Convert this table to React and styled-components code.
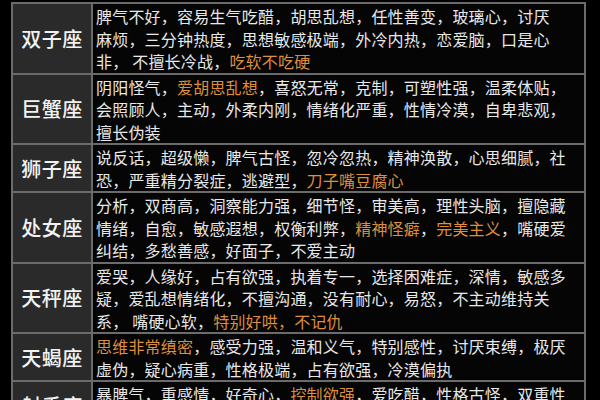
import styled, { createGlobalStyle } from "styled-components";

const GlobalStyle = createGlobalStyle`
  html, body {
    margin: 0;
    padding: 0;
    background: #000;
    width: 600px;
    height: 400px;
    overflow: hidden;
  }
  body {
    font-family: "Noto Sans CJK SC", "Noto Sans", sans-serif;
  }
`;

const Table = styled.div`
  margin: 2px 0 0 11px;
  width: 571px;
  border: 2px solid #6b6b6b;
  border-bottom: none;
  background: #050505;
`;

const Row = styled.div`
  display: grid;
  grid-template-columns: 80px 1fr;
  border-bottom: 2px solid #6b6b6b;
`;

const Sign = styled.div`
  display: flex;
  align-items: center;
  justify-content: center;
  background: #2a2a2a;
  border-right: 2px solid #6b6b6b;
  color: #f2f2f2;
  font-size: 20px;
  font-weight: 500;
  letter-spacing: 0.5px;
`;

const Traits = styled.div`
  padding: 1px 0 0 3px;
  color: #e8e8e8;
  font-size: 16px;
  line-height: 22.5px;
  letter-spacing: 0.2px;
  white-space: nowrap;
`;

const Line = styled.div``;

const Hl = styled.span`
  color: #de8e3c;
`;

const rows = [
  {
    sign: "双子座",
    lines: [
      ["脾气不好，容易生气吃醋，胡思乱想，任性善变，玻璃心，讨厌"],
      ["麻烦，三分钟热度，思想敏感极端，外冷内热，恋爱脑，口是心"],
      ["非， 不擅长冷战，", { hl: "吃软不吃硬" }],
    ],
  },
  {
    sign: "巨蟹座",
    lines: [
      ["阴阳怪气，", { hl: "爱胡思乱想" }, "，喜怒无常，克制，可塑性强，温柔体贴，"],
      ["会照顾人，主动，外柔内刚，情绪化严重，性情冷漠，自卑悲观，"],
      ["擅长伪装"],
    ],
  },
  {
    sign: "狮子座",
    lines: [
      ["说反话，超级懒，脾气古怪，忽冷忽热，精神涣散，心思细腻，社"],
      ["恐，严重精分裂症，逃避型，", { hl: "刀子嘴豆腐心" }],
    ],
  },
  {
    sign: "处女座",
    lines: [
      ["分析，双商高，洞察能力强，细节怪，审美高，理性头脑，擅隐藏"],
      [
        "情绪，自愈，敏感遐想，权衡利弊，",
        { hl: "精神怪癖" },
        "，",
        { hl: "完美主义" },
        "，嘴硬爱",
      ],
      ["纠结，多愁善感，好面子，不爱主动"],
    ],
  },
  {
    sign: "天秤座",
    lines: [
      ["爱哭，人缘好，占有欲强，执着专一，选择困难症，深情，敏感多"],
      ["疑，爱乱想情绪化，不擅沟通，没有耐心，易怒，不主动维持关"],
      ["系， 嘴硬心软，", { hl: "特别好哄，不记仇" }],
    ],
  },
  {
    sign: "天蝎座",
    lines: [
      [{ hl: "思维非常缜密" }, "，感受力强，温和义气，特别感性，讨厌束缚，极厌"],
      ["虚伪，疑心病重，性格极端，占有欲强，冷漠偏执"],
    ],
  },
  {
    sign: "射手座",
    lines: [
      ["暴脾气，重感情，好奇心，", { hl: "控制欲强" }, "，爱吃醋，性格古怪，双重性"],
      ["格，热爱自由，三分钟热度"],
    ],
  },
];

const App = () => {
  return (
    <>
      <GlobalStyle />
      <Table>
        {rows.map((row) => (
          <Row key={row.sign}>
            <Sign>{row.sign}</Sign>
            <Traits>
              {row.lines.map((line, i) => (
                <Line key={i}>
                  {line.map((part, j) =>
                    typeof part === "string" ? (
                      <span key={j}>{part}</span>
                    ) : (
                      <Hl key={j}>{part.hl}</Hl>
                    )
                  )}
                </Line>
              ))}
            </Traits>
          </Row>
        ))}
      </Table>
    </>
  );
};

export default App;
